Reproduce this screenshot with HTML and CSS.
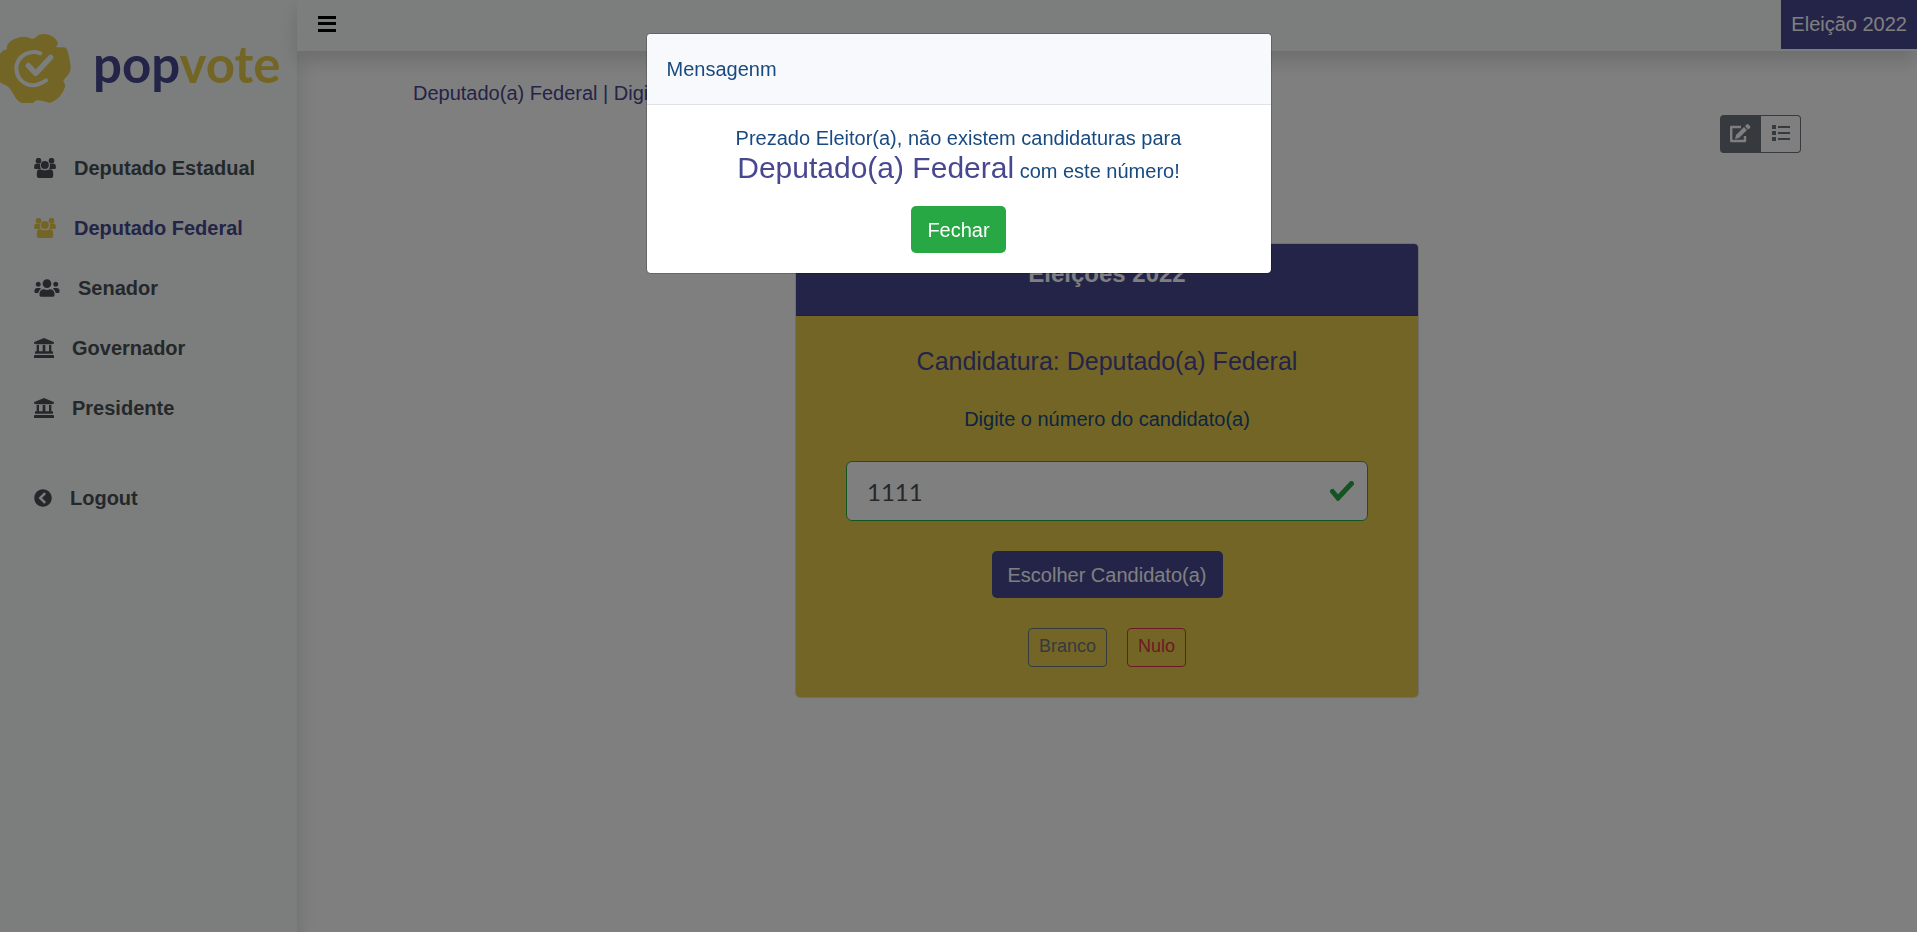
FILE: index.html
```html
<!DOCTYPE html>
<html lang="pt-BR">
<head>
<meta charset="utf-8">
<meta name="viewport" content="width=device-width, initial-scale=1">
<title>popvote</title>
<link rel="stylesheet" href="styles.css">
</head>
<body>
<svg class="sprite" aria-hidden="true">
  <symbol id="group" viewBox="0 0 65 60">
    <circle cx="13" cy="8" r="8.500"/><circle cx="52" cy="8" r="8.500"/><circle cx="32" cy="21" r="12"/>
    <path d="M5 17h11q2 0 2 3-1 6 2 13H3q-3 0-3-4v-4q0-8 5-8zM49 17h11q5 0 5 8v4q0 4-3 4H45q3-7 2-13 0-3 2-3zM16 34q4 0 7 1 9 3 18 0 3-1 7-1 9 0 9 12v8q0 6-6 6H14q-6 0-6-6v-8q0-12 8-12z"/>
  </symbol>
  <symbol id="users" viewBox="0 0 640 512">
    <path d="M96 224c35.300 0 64-28.700 64-64s-28.700-64-64-64-64 28.700-64 64 28.700 64 64 64zm448 0c35.300 0 64-28.700 64-64s-28.700-64-64-64-64 28.700-64 64 28.700 64 64 64zm32 32h-64c-17.600 0-33.500 7.100-45.100 18.600 40.300 22.100 68.900 62 75.100 109.400h66c17.700 0 32-14.300 32-32v-32c0-35.300-28.700-64-64-64zm-256 0c61.900 0 112-50.100 112-112S381.900 32 320 32 208 82.100 208 144s50.100 112 112 112zm76.800 32h-8.300c-20.800 10-43.900 16-68.500 16s-47.600-6-68.500-16h-8.300C179.600 288 128 339.600 128 403.200V432c0 26.500 21.500 48 48 48h288c26.500 0 48-21.500 48-48v-28.800c0-63.600-51.600-115.200-115.200-115.200zm-223.700-13.400C161.500 263.100 145.600 256 128 256H64c-35.300 0-64 28.700-64 64v32c0 17.700 14.300 32 32 32h65.900c6.300-47.400 34.900-87.300 75.200-109.400z"/>
  </symbol>
  <symbol id="bank" viewBox="0 0 60 60">
    <path d="M30 0l29 12q1 1 1 2v3h-5q0 2-2 2H7q-2 0-2-2H0v-3q0-1 1-2zM8 21h7v19h11V21h8v19h11V21h7v19h3q2 0 2 2v5H3v-5q0-2 2-2h3zM3 51h54q3 0 3 3v5q0 1-1 1H1q-1 0-1-1v-5q0-3 3-3z"/>
  </symbol>
  <symbol id="back" viewBox="0 0 512 512">
    <path d="M256 504C119 504 8 393 8 256S119 8 256 8s248 111 248 248-111 248-248 248zM142.100 273l135.500 135.500c9.400 9.400 24.600 9.400 33.900 0l17-17c9.400-9.400 9.400-24.600 0-33.900L226.900 256l101.600-101.600c9.400-9.400 9.400-24.600 0-33.900l-17-17c-9.400-9.400-24.600-9.400-33.900 0L142.100 239c-9.400 9.400-9.400 24.600 0 34z"/>
  </symbol>
</svg>

<div class="app">
  <aside class="sidebar">
    <a class="brand" href="#" aria-label="popvote">
      <svg class="brand-mark" viewBox="0 0 213 207" aria-hidden="true">
        <path fill="#e6cb4a" d="M20 40Q24 17 62 9q16-3 26 3 10 5 18-1 10-12 28-11 28 2 39 25 2 7-5 14 7 2 18 1 12-2 15 6 7 20 11 51 1 16-10 28-10 10-12 16 5 7 6 16-12 38-46 50-20-6-34-8-11-3-17 9-18 1-33-1-14-5-23-22-9-18-20-28Q8 151 0 145V59q10-12 21-13z"/>
        <path fill="none" stroke="#f8fdfb" stroke-width="12" stroke-linecap="round" d="M121 58Q97 49 75 61 49 76 49 104q1 28 23 42 30 18 66-7"/>
        <path fill="none" stroke="#f8fdfb" stroke-width="16" stroke-linecap="round" stroke-linejoin="round" d="M85 95l22 23 45-48"/>
      </svg>
      <span class="brand-name">pop<span class="brand-alt">vote</span></span>
    </a>
    <nav class="menu">
      <a class="menu-item" href="#"><svg class="i-group"><use href="#group"/></svg>Deputado Estadual</a>
      <a class="menu-item active" href="#"><svg class="i-group"><use href="#group"/></svg>Deputado Federal</a>
      <a class="menu-item" href="#"><svg class="i-users"><use href="#users"/></svg>Senador</a>
      <a class="menu-item" href="#"><svg class="i-bank"><use href="#bank"/></svg>Governador</a>
      <a class="menu-item" href="#"><svg class="i-bank"><use href="#bank"/></svg>Presidente</a>
      <a class="menu-item logout" href="#"><svg class="i-back"><use href="#back"/></svg>Logout</a>
    </nav>
  </aside>

  <div class="page">
    <header class="topbar">
      <button class="toggle" type="button" aria-label="Menu">
        <svg width="18" height="16" viewBox="0 0 18 16"><path d="M0 0h18v3H0zM0 6h18v3H0zM0 13h18v3H0z"/></svg>
      </button>
      <span class="badge">Eleição 2022</span>
    </header>
    <main class="content">
      <p class="crumb">Deputado(a) Federal | Digite o número</p>
      <div class="switch">
        <button class="switch-btn on" type="button" aria-label="Votar">
          <svg width="22" height="20" viewBox="0 0 22 20"><path fill="none" stroke="currentColor" stroke-width="2.400" stroke-linejoin="round" d="M12 4H2.200v14H16v-5"/><path fill="currentColor" d="M7 12l8-8 3 3-8 8-4 1zM16 3l1.500-1.500q1-1 2 0L21 3q1 1 0 2l-2 1.500z"/></svg>
        </button>
        <button class="switch-btn" type="button" aria-label="Lista">
          <svg width="18" height="16" viewBox="0 0 18 16"><path fill="currentColor" d="M0 0h4v4H0zM0 6h4v4H0zM0 12h4v4H0zM6 1h12v2H6zM6 7h12v2H6zM6 13h12v2H6z"/></svg>
        </button>
      </div>
      <section class="card">
        <h1 class="card-head">Eleições 2022</h1>
        <form class="card-body">
          <h2 class="office">Candidatura: Deputado(a) Federal</h2>
          <label class="prompt" for="numero">Digite o número do candidato(a)</label>
          <div class="field">
            <input class="number" id="numero" type="text" value="1111">
            <svg class="tick" viewBox="0 0 24 20" aria-hidden="true"><path d="M2.500 10.500L8 17 21.500 2.500"/></svg>
          </div>
          <button class="btn primary" type="button">Escolher Candidato(a)</button>
          <div class="options">
            <button class="btn-sm blank" type="button">Branco</button>
            <button class="btn-sm null" type="button">Nulo</button>
          </div>
        </form>
      </section>
    </main>
  </div>
</div>

<div class="backdrop">
  <div class="modal" role="dialog" aria-modal="true" aria-labelledby="modal-title">
    <div class="modal-head" id="modal-title">Mensagenm</div>
    <div class="modal-body">
      <p class="message">Prezado Eleitor(a), não existem candidaturas para <span class="message-office">Deputado(a) Federal</span> com este número!</p>
      <button class="btn success" type="button">Fechar</button>
    </div>
  </div>
</div>
</body>
</html>
```
FILE: styles.css
```css
* { box-sizing: border-box; }

body {
  margin: 0;
  background: #fff;
  color: #184a80;
  font: 20px/30px "Liberation Sans", Arial, sans-serif;
}

button, input { font: inherit; }
a { color: inherit; text-decoration: none; }
p, h1, h2 { margin: 0; }
.sprite { display: none; }

.app { display: flex; min-height: 100vh; }

.sidebar {
  flex: 0 0 297px;
  background: #f8fdfb;
  box-shadow: 0 10px 20px rgba(0, 0, 0, .15);
}

.brand { display: flex; align-items: flex-start; gap: 22px; padding-top: 34px; }
.brand-mark { width: 71px; height: 69px; }
.brand-name {
  color: #484891;
  font: 700 51px/60px Lato, sans-serif;
}
.brand-alt { color: #e6cb4a; }

.menu { display: flex; flex-direction: column; padding: 35px 0 0 34px; }
.menu-item {
  display: flex;
  align-items: center;
  gap: 18px;
  padding: 15px 0;
  color: #495057;
  font-weight: 700;
}
.menu-item svg { fill: currentColor; }
.menu-item.active { color: #484891; }
.menu-item.active svg { fill: #e6cb4a; }
.logout { margin-top: 30px; }
.i-group { width: 22px; height: 20px; }
.i-users { width: 26px; height: 20px; }
.i-bank { width: 20px; height: 20px; }
.i-back { width: 18px; height: 18px; }

.page { flex: 1; min-width: 0; }

.topbar {
  display: flex;
  align-items: flex-start;
  justify-content: space-between;
  height: 51px;
  background: #f8fdfb;
  box-shadow: 0 10px 20px rgba(0, 0, 0, .15);
}
.toggle { display: flex; padding: 16px 21px; border: 0; background: none; }
.badge { padding: 9px 10px 10px; background: #484891; color: #fff; }

.content { display: flex; flex-direction: column; padding: 27px 116px; }
.crumb { color: #484891; }

.switch { display: flex; align-self: flex-end; margin-top: 7px; }
.switch-btn {
  display: flex;
  justify-content: center;
  width: 40px;
  height: 38px;
  padding: 9px 0;
  border: 1px solid #6c757d;
  border-left: 0;
  border-radius: 0 4px 4px 0;
  background: #fff;
  color: #6c757d;
}
.switch-btn.on {
  width: 41px;
  padding-top: 7px;
  border-radius: 4px 0 0 4px;
  background: #6c757d;
  color: #fff;
}

.card {
  align-self: center;
  width: 100%;
  max-width: 624px;
  margin-top: 90px;
  overflow: hidden;
  border: 1px solid #dfdfdf;
  border-radius: 5px;
  text-align: center;
}
.card-head {
  padding: 15px 15px 26px;
  border-bottom: 1px solid #3e3e80;
  background: #484891;
  color: #fff;
  font-size: 24px;
  line-height: 30px;
  font-weight: 700;
}
.card-body {
  display: flex;
  flex-direction: column;
  align-items: center;
  padding: 30px 50px;
  background: #e6cb4a;
}
.office { color: #484891; font-size: 25px; line-height: 30px; font-weight: 400; }
.prompt { margin-top: 28px; }
.field { position: relative; width: 100%; margin-top: 27px; }
.number {
  display: block;
  width: 100%;
  height: 60px;
  padding: 10px 60px 10px 20px;
  border: 1px solid #28a745;
  border-radius: 6px;
  background: #fff;
  color: #495057;
  font: 24px/38px Lato, sans-serif;
}
.tick {
  position: absolute;
  top: 20px;
  right: 14px;
  width: 24px;
  height: 20px;
  fill: none;
  stroke: #28a745;
  stroke-width: 5;
  stroke-linecap: round;
}

.btn {
  height: 47px;
  padding: 0 16px;
  border: 0;
  border-radius: 5px;
  color: #fff;
}
.primary { margin-top: 30px; background: #484891; }
.success { background: #28a745; }
.options { display: flex; gap: 20px; margin-top: 30px; }
.btn-sm {
  height: 39px;
  padding: 0 10px 4px;
  border: 1px solid;
  border-radius: 4px;
  background: none;
  font-size: 18px;
}
.blank { border-color: #6c757d; color: #6c757d; }
.null { border-color: #dc3545; color: #dc3545; }

.backdrop {
  position: fixed;
  inset: 0;
  padding: 33px 20px;
  background: rgba(0, 0, 0, .5);
}
.modal {
  max-width: 626px;
  margin: 0 auto;
  overflow: hidden;
  border: 1px solid rgba(0, 0, 0, .2);
  border-radius: 5px;
  background: #fff;
  background-clip: padding-box;
}
.modal-head {
  padding: 20px;
  border-bottom: 1px solid #dee2e6;
  background: #f8f9fc;
}
.modal-body { padding: 18px 60px 20px; text-align: center; }
.message { margin-bottom: 20px; }
.message-office { color: #484891; font-size: 30px; }
```
